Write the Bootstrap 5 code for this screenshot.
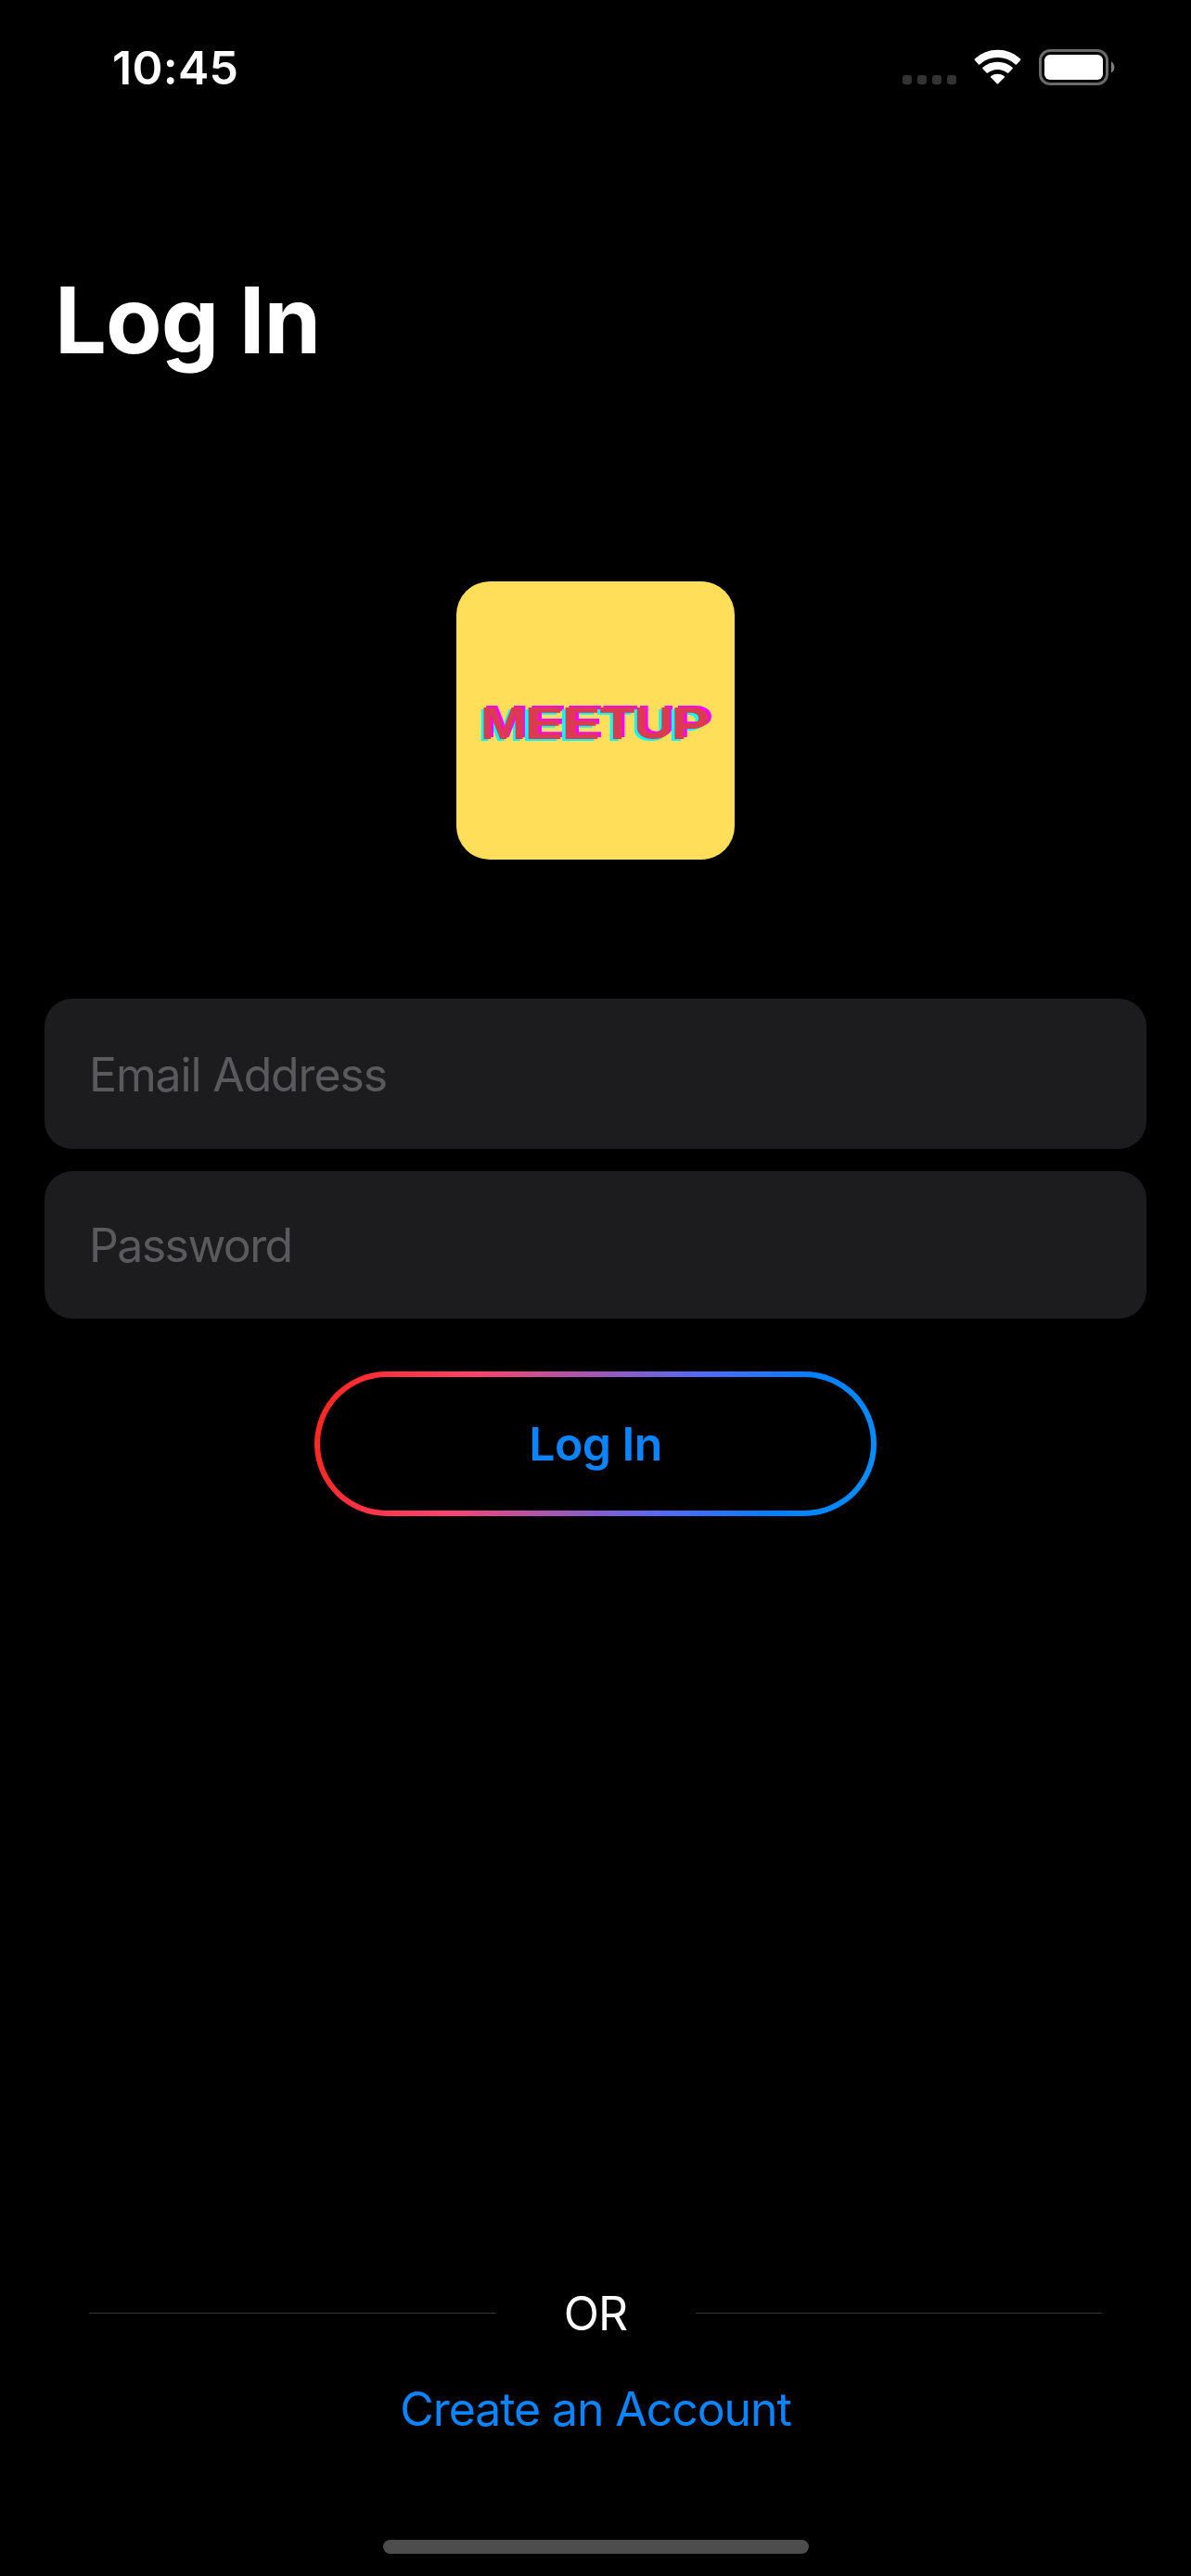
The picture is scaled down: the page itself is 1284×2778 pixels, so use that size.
<!DOCTYPE html>
<html lang="en" data-bs-theme="dark">
<head>
<meta charset="utf-8">
<meta name="viewport" content="width=device-width, initial-scale=1">
<title>Log In</title>
<link href="https://cdn.jsdelivr.net/npm/bootstrap@5.3.0/dist/css/bootstrap.min.css" rel="stylesheet">
<style>
  body { background: #000; color: #fff; font-family: Inter, "Liberation Sans", sans-serif; font-size: 50px; line-height: 60px; }
  .screen { width: 1284px; height: 2778px; }
  .status-bar { height: 144px; padding: 43px 82px 0 121px; }
  .clock { font-weight: 600; font-size: 50px; line-height: 60px; letter-spacing: .3px; }
  .status-icons { height: 60px; }
  .screen-title { font-size: 99px; line-height: 120px; font-weight: 700; letter-spacing: -1px; margin: 141px 0 0 59px; }
  .logo-tile { width: 300px; height: 300px; border-radius: 36px; background: #ffde59; margin-top: 222px; }
  .logo-text { font: 700 47px Inter, "Liberation Sans", sans-serif; fill: #dc3a4e; text-shadow: 2.5px -2px 0 #f0f, -2.5px 2px 0 #0ff; }
  .login-form { margin-top: 150px; padding: 0 48px; gap: 24px; }
  .login-form .form-control { height: 159px; border: 0; border-radius: 30px; background: #1c1c1e; font-size: 50px; padding: 0 48px; letter-spacing: -1.6px; }
  .login-form .email-field { height: 162px; padding-top: 2px; letter-spacing: -1.15px; }
  .login-form .form-control::placeholder { color: #5a5a5e; opacity: 1; }
  .btn-login { width: 606px; height: 156px; margin-top: 33px; padding-top: 7px; border: 6px solid transparent; border-radius: 78px; color: #0a84ff; font-size: 50px; font-weight: 600; letter-spacing: -.6px;
    background: linear-gradient(#000, #000) padding-box, linear-gradient(104.4deg, #ff2419 0%, #ff416c 27%, #4b6cff 66%, #007fff 83%, #0090ff 100%) border-box; }
  .divider { padding: 0 96px; }
  .divider .rule { height: 1px; margin-bottom: 2px; background: #38383a; }
  .divider .or-label { width: 215px; letter-spacing: -1px; }
  .create-link { color: #0a84ff; margin-top: 43px; letter-spacing: -1.1px; }
  .home-indicator { width: 459px; height: 15px; border-radius: 8px; background: #4d4d4d; margin: 111px 0 24px; }
</style>
</head>
<body>
<main class="screen d-flex flex-column overflow-hidden">
  <header class="status-bar d-flex justify-content-between">
    <div class="clock">10:45</div>
    <svg class="status-icons" width="230" height="60" viewBox="972 43 230 60" aria-hidden="true">
      <g fill="#333"><rect x="973" y="81" width="10" height="10" rx="3"/><rect x="989" y="81" width="10" height="10" rx="3"/><rect x="1005" y="81" width="10" height="10" rx="3"/><rect x="1021" y="81" width="10" height="10" rx="3"/></g>
      <g fill="#fff">
        <path d="M1050.800 63.500Q1050.200 64.300 1051 65.100L1055 69.400Q1055.800 70 1056.600 69.300A28 28 0 0 1 1094.400 69.300Q1095.200 70 1096 69.400L1100 65.100Q1100.800 64.300 1100.200 63.500A36.500 36.500 0 0 0 1050.800 63.500Z"/>
        <path d="M1059.400 72.800Q1058.800 73.600 1059.500 74.300L1063.600 78.500Q1064.300 79.200 1065.200 78.500A16.500 16.500 0 0 1 1085.800 78.500Q1086.700 79.200 1087.400 78.500L1091.500 74.300Q1092.200 73.600 1091.600 72.800A24.500 24.500 0 0 0 1059.400 72.800Z"/>
        <path d="M1068.300 82Q1067.700 82.700 1068.300 83.400L1074.800 90.300Q1075.500 91 1076.200 90.300L1082.700 83.400Q1083.300 82.700 1082.700 82A12.500 12.500 0 0 0 1068.300 82Z"/>
        <rect x="1126" y="59" width="63" height="27" rx="6"/>
      </g>
      <rect x="1121.500" y="54.500" width="72" height="36" rx="10.500" fill="none" stroke="#696969" stroke-width="3"/>
      <path d="M1198 66.500A7 7 0 0 1 1198 78.500Z" fill="#808080"/>
    </svg>
  </header>

  <h1 class="screen-title">Log In</h1>

  <svg class="logo-tile align-self-center flex-shrink-0" viewBox="0 0 300 300" role="img" aria-label="Meetup">
    <text class="logo-text" y="170"><tspan x="26" textLength="49" lengthAdjust="spacingAndGlyphs">M</tspan><tspan x="73" textLength="43" lengthAdjust="spacingAndGlyphs">E</tspan><tspan x="113" textLength="43" lengthAdjust="spacingAndGlyphs">E</tspan><tspan x="153" textLength="41" lengthAdjust="spacingAndGlyphs">T</tspan><tspan x="191" textLength="43" lengthAdjust="spacingAndGlyphs">U</tspan><tspan x="231" textLength="43" lengthAdjust="spacingAndGlyphs">P</tspan></text>
  </svg>

  <form class="login-form d-flex flex-column">
    <input class="form-control email-field" type="email" placeholder="Email Address" aria-label="Email Address">
    <input class="form-control" type="password" placeholder="Password" aria-label="Password">
    <button class="btn btn-login align-self-center" type="button">Log In</button>
  </form>

  <footer class="mt-auto d-flex flex-column align-items-center">
    <div class="divider d-flex align-items-center w-100">
      <div class="rule flex-fill"></div>
      <div class="or-label text-center">OR</div>
      <div class="rule flex-fill"></div>
    </div>
    <a class="create-link text-decoration-none" href="#">Create an Account</a>
    <div class="home-indicator"></div>
  </footer>
</main>
<script src="https://cdn.jsdelivr.net/npm/bootstrap@5.3.0/dist/js/bootstrap.bundle.min.js"></script>
</body>
</html>
